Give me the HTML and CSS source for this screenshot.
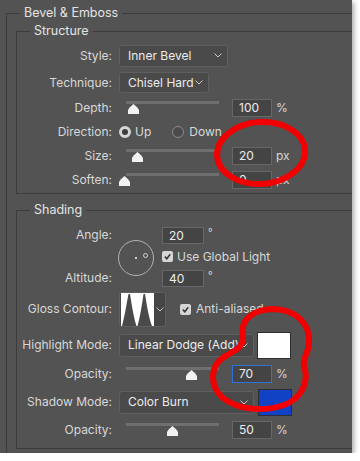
FILE: index.html
```html
<!DOCTYPE html>
<html lang="en">
<head>
    <meta charset="UTF-8">
    <meta name="viewport" content="width=device-width, initial-scale=1.0">
    <title>Bevel &amp; Emboss</title>
    <link rel="stylesheet" href="styles.css">
</head>
<body>
    <div class="panel">
        <fieldset class="group outer">
            <legend>Bevel &amp; Emboss</legend>

            <fieldset class="group section structure">
                <legend>Structure</legend>
                <div class="row tall">
                    <span class="label">Style:</span>
                    <div class="select style-select"><span>Inner Bevel</span><svg class="chevron" viewBox="0 0 8 5"><path d="M0.5 0.5 L4 4 L7.5 0.5"/></svg></div>
                </div>
                <div class="row tall">
                    <span class="label">Technique:</span>
                    <div class="select technique-select"><span>Chisel Hard</span><svg class="chevron" viewBox="0 0 8 5"><path d="M0.5 0.5 L4 4 L7.5 0.5"/></svg></div>
                </div>
                <div class="row">
                    <span class="label">Depth:</span>
                    <div class="slider"><div class="track"></div><span class="thumb" style="left: 9px"></span></div>
                    <span class="field">100</span><span class="unit">%</span>
                </div>
                <div class="row">
                    <span class="label">Direction:</span>
                    <span class="radio on"></span><span class="option">Up</span>
                    <span class="radio down"></span><span class="option">Down</span>
                </div>
                <div class="row">
                    <span class="label">Size:</span>
                    <div class="slider"><div class="track"></div><span class="thumb" style="left: 13px"></span></div>
                    <span class="field">20</span><span class="unit">px</span>
                </div>
                <div class="row">
                    <span class="label">Soften:</span>
                    <div class="slider"><div class="track"></div><span class="thumb" style="left: 0px"></span></div>
                    <span class="field">0</span><span class="unit">px</span>
                </div>
            </fieldset>

            <fieldset class="group section shading">
                <legend>Shading</legend>
                <div class="angle-block">
                    <span class="label angle-label">Angle:</span>
                    <span class="label altitude-label">Altitude:</span>
                    <div class="dial"><span class="dot"></span><span class="knob"></span></div>
                    <div class="angle-row"><span class="field small">20</span><span class="deg">°</span></div>
                    <div class="global-row"><span class="checkbox"><svg viewBox="0 0 10 10"><path d="M2 5.2 L4.2 7.4 L8 2.6"/></svg></span><span class="option">Use Global Light</span></div>
                    <div class="altitude-row"><span class="field small">40</span><span class="deg">°</span></div>
                </div>
                <div class="row contour-row">
                    <span class="label">Gloss Contour:</span>
                    <div class="contour">
                        <svg class="curve" viewBox="0 0 33 33"><rect width="33" height="33" fill="#fff"/><path d="M1 33 C4 22 6 8 7.5 1 L9 1 C10.5 10 12.5 24 15.5 33 Z M16.5 33 C19.5 22 21.5 8 22.5 1 L24 1 C25.5 10 27.5 24 31 33 Z" fill="#4a4a4a"/></svg>
                        <svg class="chevron" viewBox="0 0 8 5"><path d="M0.5 0.5 L4 4 L7.5 0.5"/></svg>
                    </div>
                    <span class="checkbox anti"><svg viewBox="0 0 10 10"><path d="M2 5.2 L4.2 7.4 L8 2.6"/></svg></span><span class="option">Anti-aliased</span>
                </div>
                <div class="row mode-row highlight">
                    <span class="label">Highlight Mode:</span>
                    <div class="select mode-select"><span>Linear Dodge (Add)</span><svg class="chevron" viewBox="0 0 8 5"><path d="M0.5 0.5 L4 4 L7.5 0.5"/></svg></div>
                    <span class="swatch white"></span>
                </div>
                <div class="row">
                    <span class="label">Opacity:</span>
                    <div class="slider"><div class="track"></div><span class="thumb" style="left: 67px"></span></div>
                    <span class="field focused">70</span><span class="unit">%</span>
                </div>
                <div class="row mode-row shadow">
                    <span class="label">Shadow Mode:</span>
                    <div class="select mode-select"><span>Color Burn</span><svg class="chevron" viewBox="0 0 8 5"><path d="M0.5 0.5 L4 4 L7.5 0.5"/></svg></div>
                    <span class="swatch blue"></span>
                </div>
                <div class="row">
                    <span class="label">Opacity:</span>
                    <div class="slider"><div class="track"></div><span class="thumb" style="left: 48px"></span></div>
                    <span class="field">50</span><span class="unit">%</span>
                </div>
            </fieldset>
        </fieldset>

        <!-- red marker annotations drawn over the dialog -->
        <svg class="marks" viewBox="0 0 352 453">
            <ellipse cx="261" cy="153" rx="44" ry="31" transform="rotate(-4 261 153)"/>
            <path d="M243 338 C239 318 255 309 274 309 C296 310 311 324 309 344 C308 354 302 359 304 366 C309 380 303 398 284 405 C264 412 238 410 223 398 C209 386 210 366 224 357 C232 351 242 350 243 338 Z"/>
        </svg>
    </div>
</body>
</html>
```

FILE: styles.css
```css
body {
    margin: 0;
    background-color: #fff;
    font-family: Inter, "Liberation Sans", sans-serif;
    font-size: 12px;
    line-height: 16px;
    color: #d8d8d8;
}
.panel {
    position: relative;
    width: 352px;
    height: 453px;
    padding-top: 5px;
    box-sizing: border-box;
    background-color: #535353;
    overflow: hidden;
    box-shadow: 2px 2px 5px rgba(0,0,0,0.35);
}
.group {
    margin: 0;
    padding: 0;
    min-width: 0;
    border: 1px solid #3c3c3c;
}
.group legend {
    margin-left: 13px;
    padding: 0 4px;
    color: #e4e4e4;
    font-size: 12.5px;
}
.outer {
    margin-left: 6px;
    width: 400px;
    height: 520px;
}
.section {
    margin-left: 9px;
    width: 380px;
}
.structure {
    margin-top: 2px;
    padding: 3px 0 1px;
}
.shading {
    margin-top: 8px;
    padding: 5px 0 6px;
}
.row {
    display: flex;
    align-items: center;
    height: 24px;
}
.row.tall {
    height: 27px;
}
.label {
    width: 95px;
    margin-right: 7px;
    text-align: right;
    white-space: nowrap;
}
.select {
    display: flex;
    align-items: center;
    justify-content: space-between;
    box-sizing: border-box;
    height: 22px;
    padding: 0 5px 0 8px;
    background-color: #4a4a4a;
    border: 1px solid #5f5f5f;
    border-radius: 3px;
    color: #ececec;
    white-space: nowrap;
}
.style-select {
    width: 109px;
}
.technique-select {
    width: 90px;
    height: 21px;
}
.mode-select {
    width: 135px;
    height: 23px;
}
.chevron {
    width: 8px;
    height: 5px;
    flex: none;
    fill: none;
    stroke: #c8c8c8;
    stroke-width: 1;
}
.slider {
    position: relative;
    width: 113px;
    align-self: stretch;
}
.track {
    height: 3px;
    width: 93px;
    margin: 5px 0 0 7px;
    background-color: #6f6f6f;
}
.thumb {
    position: absolute;
    top: 8px;
    width: 11px;
    height: 10px;
    background-color: #f2f2f2;
    clip-path: polygon(50% 0, 85% 35%, 100% 60%, 100% 100%, 0 100%, 0 60%, 15% 35%);
}
.field {
    box-sizing: border-box;
    width: 40px;
    height: 18px;
    padding: 0 6px;
    background-color: #444;
    border: 1px solid #676767;
    color: #ececec;
    line-height: 16px;
}
.field.small {
    width: 42px;
    height: 17px;
    line-height: 15px;
}
.field.focused {
    border-color: #2f72d8;
}
.unit {
    margin-left: 4px;
}
.radio {
    box-sizing: border-box;
    width: 12px;
    height: 12px;
    border-radius: 50%;
    border: 1px solid #8a8a8a;
}
.radio.on {
    border: 3px solid #d6d6d6;
    background-color: #3d3d3d;
}
.radio.down {
    margin-left: 21px;
    background-color: #4a4a4a;
}
.option {
    margin-left: 4px;
    white-space: nowrap;
}
.radio.down + .option {
    margin-left: 5px;
}
.angle-block {
    display: grid;
    grid-template-columns: 101px 44px auto;
    grid-template-rows: 24px 19px 24px;
    height: 67px;
}
.angle-label, .altitude-label {
    grid-column: 1;
    align-self: center;
    width: auto;
    margin-right: 0;
    padding-right: 6px;
}
.angle-label { grid-row: 1; }
.altitude-label { grid-row: 3; }
.dial {
    grid-column: 2;
    grid-row: 1 / 4;
    align-self: center;
    position: relative;
    box-sizing: border-box;
    width: 36px;
    height: 36px;
    margin-top: 2px;
    border: 1px solid #b4b4b4;
    border-radius: 50%;
}
.dot {
    position: absolute;
    left: 16px;
    top: 16px;
    width: 2px;
    height: 2px;
    background-color: #d0d0d0;
}
.knob {
    position: absolute;
    left: 24px;
    top: 12px;
    box-sizing: border-box;
    width: 5px;
    height: 5px;
    border: 1px solid #d0d0d0;
    border-radius: 50%;
}
.angle-row, .global-row, .altitude-row {
    grid-column: 3;
    display: flex;
    align-items: center;
}
.angle-row { grid-row: 1; }
.global-row { grid-row: 2; }
.altitude-row { grid-row: 3; }
.deg {
    margin-left: 4px;
    margin-top: -6px;
    font-size: 10px;
}
.checkbox {
    display: flex;
    align-items: center;
    justify-content: center;
    width: 11px;
    height: 11px;
    border-radius: 2px;
    background-color: #d6d6d6;
}
.checkbox svg {
    width: 9px;
    height: 9px;
    fill: none;
    stroke: #3a3a3a;
    stroke-width: 1.8;
}
.contour-row {
    height: 38px;
}
.contour {
    display: flex;
    align-items: center;
    box-sizing: border-box;
    width: 47px;
    height: 35px;
    padding: 1px;
    background-color: #454545;
    border: 1px solid #5f5f5f;
    border-radius: 2px;
}
.curve {
    width: 33px;
    height: 33px;
}
.contour .chevron {
    margin-left: 2px;
}
.checkbox.anti {
    margin-left: 14px;
}
.checkbox.anti + .option {
    margin-left: 5px;
}
.row.highlight {
    height: 34px;
}
.row.shadow {
    height: 32px;
}
.swatch {
    box-sizing: border-box;
    width: 34px;
    height: 27px;
    margin-left: 3px;
    border: 1px solid #2e2e2e;
}
.swatch.white {
    background-color: #fff;
}
.swatch.blue {
    background-color: #1142c6;
    margin-left: 4px;
}
.marks {
    position: absolute;
    top: 0;
    left: 0;
    width: 352px;
    height: 453px;
    pointer-events: none;
    fill: none;
    stroke: #f20000;
    stroke-width: 6;
}
```
